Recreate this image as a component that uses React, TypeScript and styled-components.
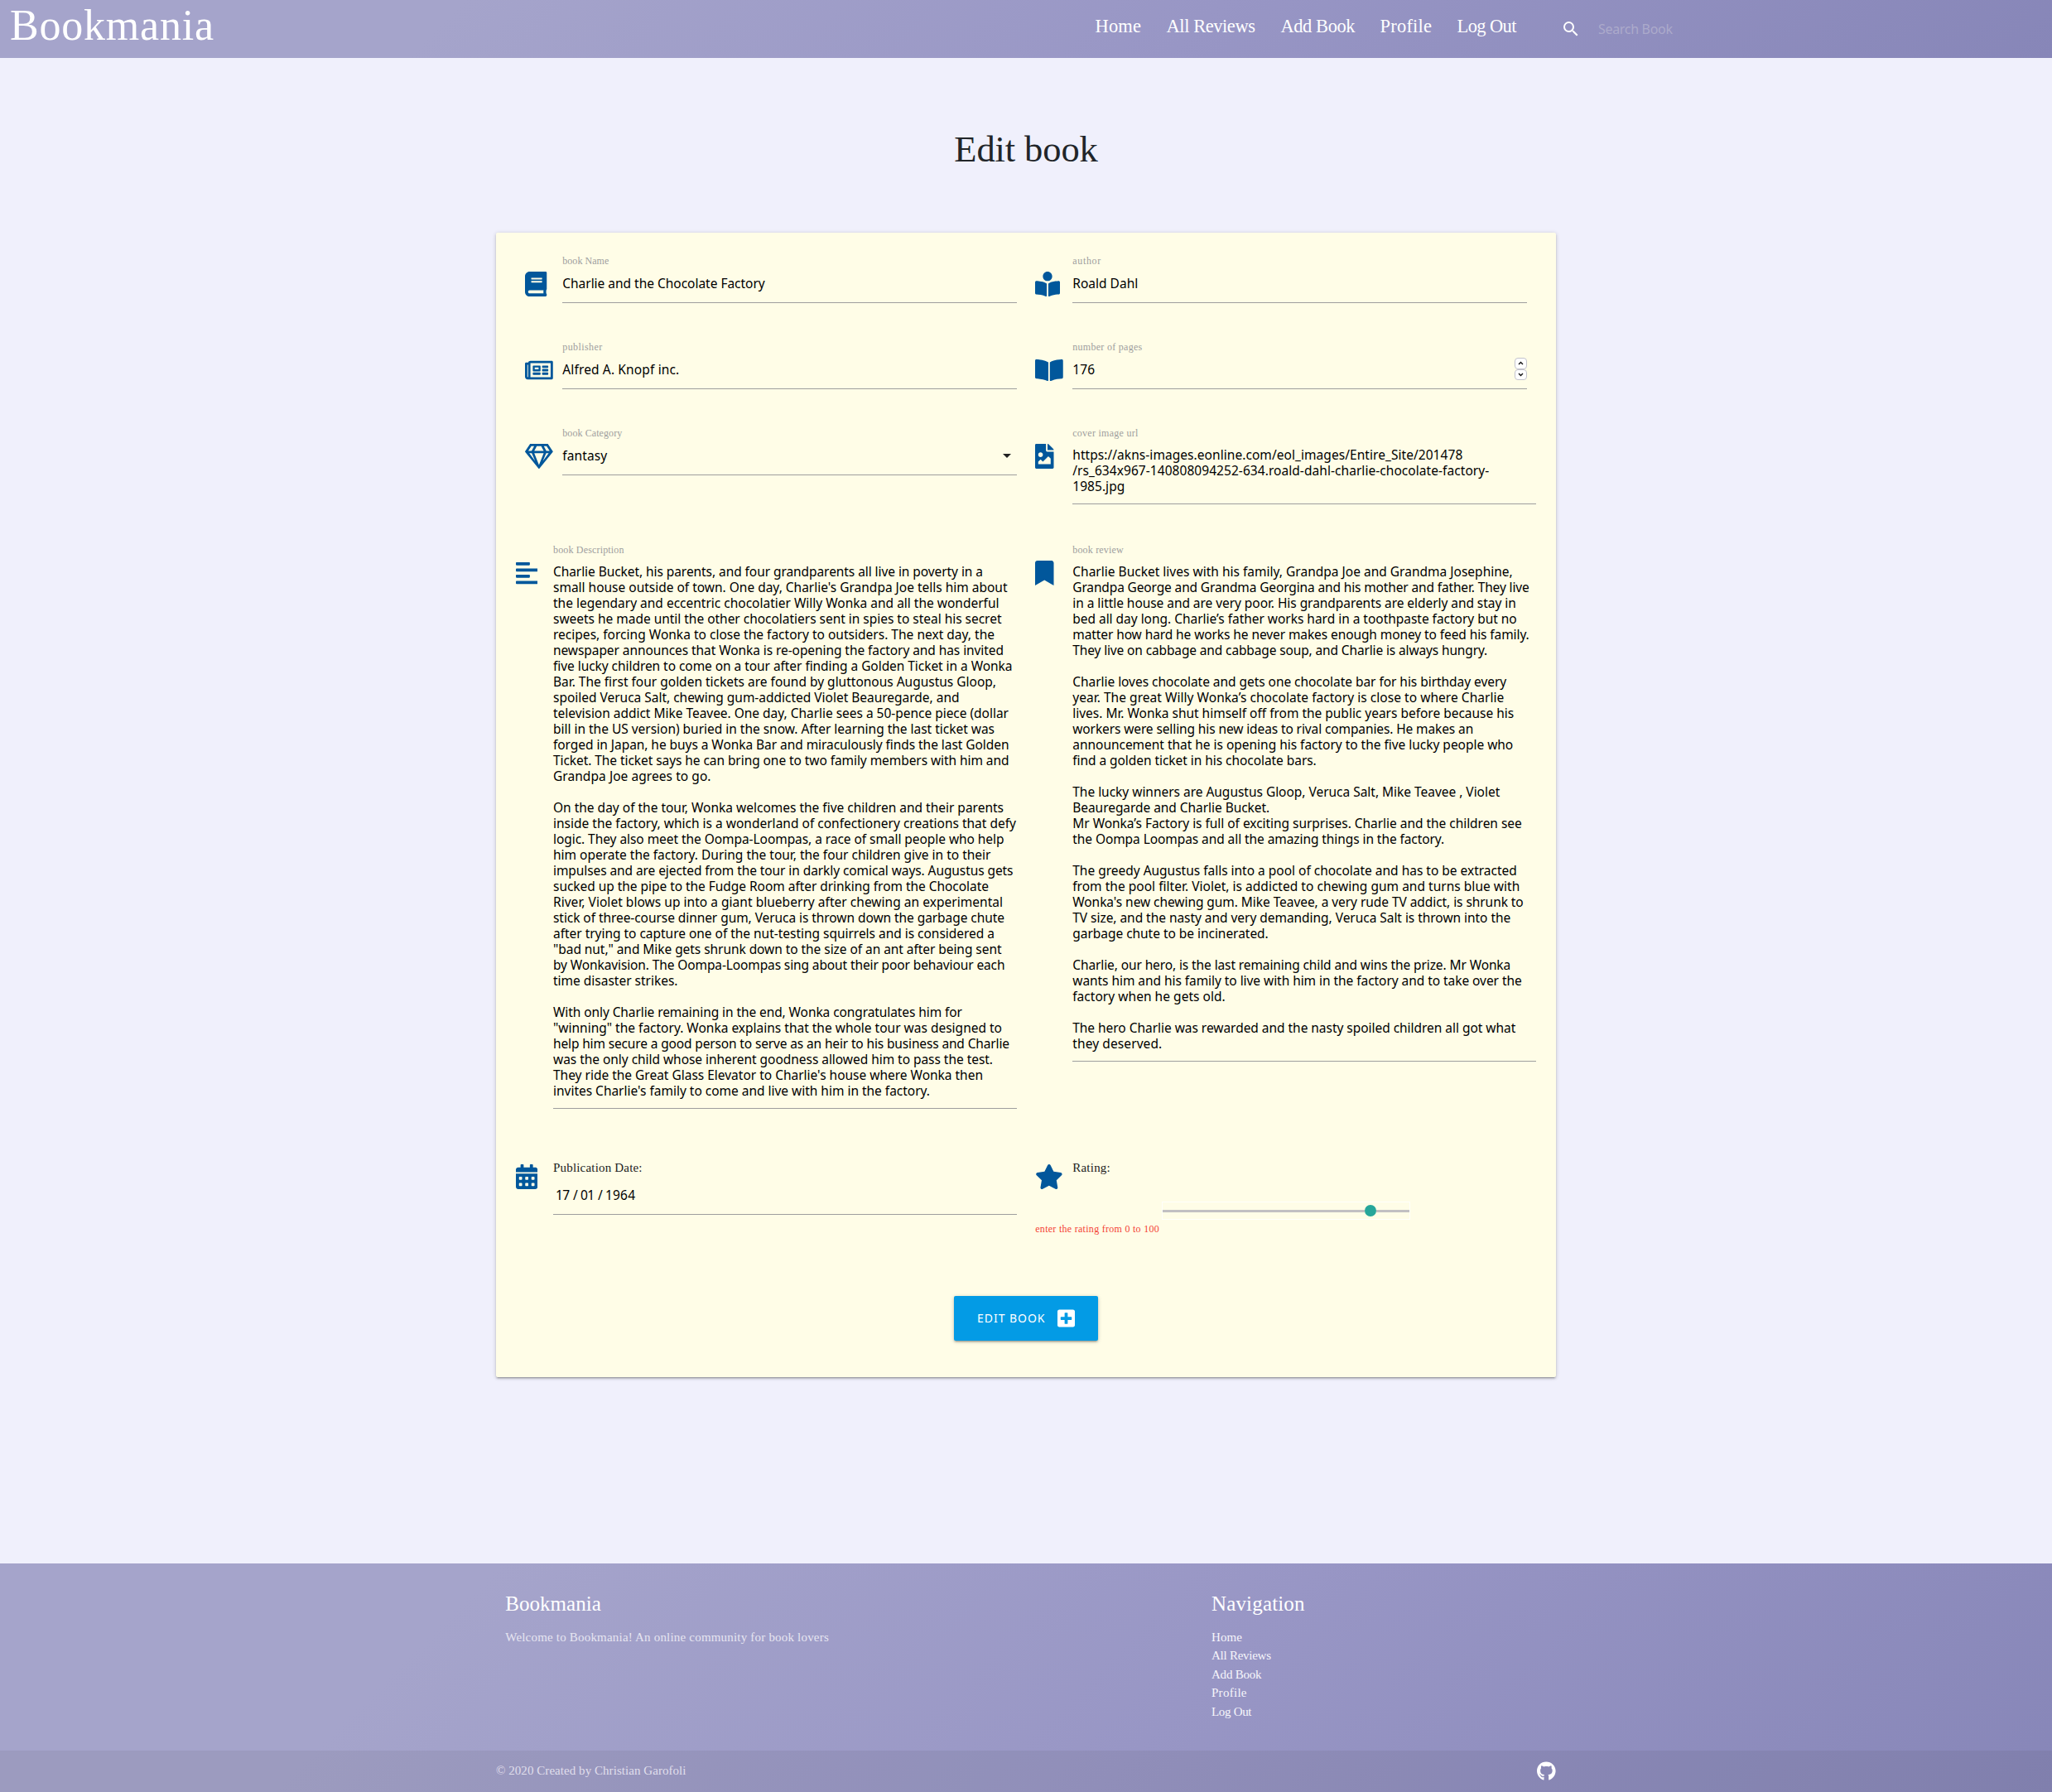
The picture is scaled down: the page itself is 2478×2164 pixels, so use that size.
import React, { useLayoutEffect, useRef, useState } from "react";
import styled, { createGlobalStyle } from "styled-components";
import {
  FaAlignLeft,
  FaBook,
  FaBookmark,
  FaBookOpen,
  FaBookReader,
  FaCalendarAlt,
  FaFileImage,
  FaGithub,
  FaPlusSquare,
  FaRegGem,
  FaRegNewspaper,
  FaStar,
} from "react-icons/fa";
import { MdSearch } from "react-icons/md";

const serif = '"Liberation Serif", serif';
const sans = '"Noto Sans", sans-serif';
const gradient =
  "linear-gradient(135deg, #a5a4cb 22%, #9896c5 58%, #8786b8 100%)";

const GlobalStyle = createGlobalStyle`
  *, *::before, *::after { box-sizing: border-box; }
  body {
    margin: 0;
    background: #f0f0fc;
    color: #212529;
    font-family: ${serif};
    font-size: 15px;
  }
  ul { list-style: none; margin: 0; padding: 0; }
  h1, h2, p { margin: 0; font-weight: 400; }
  a { color: inherit; text-decoration: none; }
`;

/* A single line of text whose tracking is tuned so that it spans a given width. */
const Tracked = styled.span`
  white-space: pre;
`;

function Line({ text, width }: { text: string; width: number }) {
  const ref = useRef<HTMLSpanElement>(null);
  const [spacing, setSpacing] = useState(0);
  useLayoutEffect(() => {
    const el = ref.current;
    if (!el || text.length < 2) return;
    el.style.letterSpacing = "0px";
    const natural = el.getBoundingClientRect().width;
    const next = (width - natural) / (text.length - 1);
    el.style.letterSpacing = `${next}px`;
    setSpacing(next);
  }, [text, width]);
  return (
    <Tracked ref={ref} style={{ letterSpacing: `${spacing}px` }}>
      {text}
    </Tracked>
  );
}

const Page = styled.div`
  width: 2478px;
  min-height: 2164px;
  display: flex;
  flex-direction: column;
`;

const Header = styled.header`
  height: 70px;
  display: flex;
  align-items: flex-start;
  padding-left: 12px;
  background: ${gradient};
  color: #fff;
`;

const Logo = styled.a`
  font-size: 52px;
  line-height: 62px;
`;

const NavList = styled.ul`
  display: flex;
  margin-left: auto;
`;

const NavItem = styled.li<{ $w: number }>`
  width: ${(p) => p.$w}px;
  font-size: 22.5px;
  line-height: 64px;
`;

const Search = styled.div`
  width: 593.5px;
  height: 70px;
  display: flex;
  align-items: center;
  gap: 21.5px;
  svg { width: 24px; height: 24px; }
`;

const SearchHint = styled.span`
  padding-bottom: 1px;
  font-family: ${sans};
  font-size: 16px;
  color: #acaacb;
`;

const Main = styled.main`
  flex: 1;
  padding-top: 85px;
  display: flex;
  flex-direction: column;
  align-items: center;
`;

const Title = styled.h1`
  font-size: 44.5px;
  line-height: 50px;
  margin-bottom: 76px;
`;

const Card = styled.form`
  width: 1280px;
  height: 1382px;
  padding: 26px 24px 0;
  background: #fffde7;
  border-radius: 2px;
  box-shadow: 0 2px 2px 0 rgba(0, 0, 0, 0.14), 0 3px 1px -2px rgba(0, 0, 0, 0.12),
    0 1px 5px 0 rgba(0, 0, 0, 0.2);
`;

const Row = styled.div<{ $h: number }>`
  display: grid;
  grid-template-columns: 616px 616px;
  align-items: start;
  height: ${(p) => p.$h}px;
`;

const Cell = styled.div<{ $left?: boolean; $right?: boolean }>`
  display: grid;
  grid-template-columns: 45px 1fr;
  padding-left: ${(p) => (p.$left ? 11.25 : 0)}px;
  padding-right: ${(p) => (p.$right ? 11.25 : 0)}px;
`;

const IconSlot = styled.div<{ $w: number; $top?: number }>`
  padding-top: ${(p) => p.$top ?? 20.5}px;
  color: #01579b;
  line-height: 0;
  svg { height: 30px; width: ${(p) => p.$w}px; }
`;

const Label = styled.div`
  font-size: 12px;
  line-height: 16px;
  color: #9e9e9e;
`;

const Caption = styled.div`
  font-size: 15px;
  line-height: 22px;
  height: 34px;
  color: #212121;
`;

const Value = styled.div<{ $gap: number; $bottom: number; $indent?: number }>`
  display: flex;
  justify-content: space-between;
  align-items: center;
  margin-top: ${(p) => p.$gap}px;
  padding-bottom: ${(p) => p.$bottom}px;
  padding-left: ${(p) => p.$indent ?? 0}px;
  border-bottom: 1px solid #9e9e9e;
  font-family: ${sans};
  font-size: 15.5px;
  line-height: 19px;
  color: #000;
`;

const TextArea = styled.div`
  width: 100%;
`;

const TextLine = styled.div`
  height: 19px;
`;

const Caret = styled.span`
  margin-right: 7px;
  border: 5px solid transparent;
  border-top-color: #212121;
  border-bottom-width: 0;
`;

const Spinner = styled.span`
  display: flex;
  flex-direction: column;
  width: 14.5px;
  margin: -5px 0 -3px;
`;

const Step = styled.span`
  display: flex;
  align-items: center;
  justify-content: center;
  height: 13.5px;
  border: 1px solid #c3c3cc;
  border-radius: 4px;
  background: #fff;
  svg { width: 7px; height: 5px; }
`;

const DateParts = styled.div`
  display: flex;
`;

const DatePart = styled.span<{ $w: number }>`
  width: ${(p) => p.$w}px;
`;

const Slider = styled.div`
  grid-column: 1 / -1;
  width: 300.5px;
  height: 22px;
  margin: 15.5px 0 0 152.5px;
  border: 1px solid #fffffb;
  display: flex;
  align-items: center;
`;

const Track = styled.div<{ $w: number }>`
  width: ${(p) => p.$w}px;
  height: 3px;
  background: #c2c0c2;
`;

const Thumb = styled.div`
  width: 14px;
  height: 14px;
  border-radius: 50%;
  background: #26a69a;
`;

const Helper = styled.div`
  grid-column: 1 / -1;
  margin-top: 3px;
  font-size: 12px;
  line-height: 16px;
  color: #f44336;
`;

const Submit = styled.button`
  display: flex;
  align-items: center;
  gap: 15px;
  width: 174px;
  height: 54px;
  margin: 0 auto;
  padding: 0 0 0 28px;
  border: 0;
  border-radius: 2px;
  background: #039be5;
  color: #fff;
  font-family: ${sans};
  font-size: 14px;
  box-shadow: 0 2px 2px 0 rgba(0, 0, 0, 0.14), 0 3px 1px -2px rgba(0, 0, 0, 0.12),
    0 1px 5px 0 rgba(0, 0, 0, 0.2);
  span { padding-bottom: 1px; }
  svg { width: 21px; height: 24px; }
`;

const Footer = styled.footer`
  background: ${gradient};
  color: #fff;
`;

const FooterTop = styled.div`
  display: grid;
  grid-template-columns: 841.5px 1fr;
  width: 1280px;
  height: 226px;
  margin: 0 auto;
  padding: 35px 11.25px 0;
`;

const FooterTitle = styled.h2`
  font-size: 25px;
  line-height: 28px;
  margin-bottom: 14.75px;
`;

const FooterText = styled.p`
  font-size: 15px;
  line-height: 22.5px;
  color: #e6e5f1;
`;

const FooterLink = styled.li`
  font-size: 15px;
  line-height: 22.5px;
  color: #f6f5fb;
`;

const FooterNav = styled.div`
  padding-left: 11.25px;
`;

const Copyright = styled.div`
  background: rgba(51, 51, 51, 0.08);
`;

const CopyrightInner = styled.div`
  display: flex;
  justify-content: space-between;
  align-items: flex-start;
  width: 1280px;
  height: 50px;
  margin: 0 auto;
  line-height: 48px;
  color: #e0dfec;
  svg { width: 22.6px; height: 23.5px; margin-top: 12.5px; color: #fff; }
`;

type TextRow = [string, number];

const navItems: [string, number, number][] = [
  ["Home", 86, 55.5],
  ["All Reviews", 138, 107.5],
  ["Add Book", 120, 90],
  ["Profile", 93, 62.5],
  ["Log Out", 125, 72],
];

const footerLinks: TextRow[] = [
  ["Home", 37],
  ["All Reviews", 72],
  ["Add Book", 60.5],
  ["Profile", 42.5],
  ["Log Out", 48.5],
];

const coverUrl: TextRow[] = [
  ["https://akns-images.eonline.com/eol_images/Entire_Site/201478", 471],
  ["/rs_634x967-140808094252-634.roald-dahl-charlie-chocolate-factory-", 503],
  ["1985.jpg", 63],
];

const description: TextRow[] = [
  ["Charlie Bucket, his parents, and four grandparents all live in poverty in a", 519],
  ["small house outside of town. One day, Charlie's Grandpa Joe tells him about", 548.5],
  ["the legendary and eccentric chocolatier Willy Wonka and all the wonderful", 538.5],
  ["sweets he made until the other chocolatiers sent in spies to steal his secret", 541.5],
  ["recipes, forcing Wonka to close the factory to outsiders. The next day, the", 533],
  ["newspaper announces that Wonka is re-opening the factory and has invited", 544],
  ["five lucky children to come on a tour after finding a Golden Ticket in a Wonka", 554.5],
  ["Bar. The first four golden tickets are found by gluttonous Augustus Gloop,", 535],
  ["spoiled Veruca Salt, chewing gum-addicted Violet Beauregarde, and", 490.5],
  ["television addict Mike Teavee. One day, Charlie sees a 50-pence piece (dollar", 550],
  ["bill in the US version) buried in the snow. After learning the last ticket was", 533],
  ["forged in Japan, he buys a Wonka Bar and miraculously finds the last Golden", 550.5],
  ["Ticket. The ticket says he can bring one to two family members with him and", 550.5],
  ["Grandpa Joe agrees to go.", 190.5],
  ["", 0],
  ["On the day of the tour, Wonka welcomes the five children and their parents", 544],
  ["inside the factory, which is a wonderland of confectionery creations that defy", 559],
  ["logic. They also meet the Oompa-Loompas, a race of small people who help", 544.5],
  ["him operate the factory. During the tour, the four children give in to their", 528.5],
  ["impulses and are ejected from the tour in darkly comical ways. Augustus gets", 555.5],
  ["sucked up the pipe to the Fudge Room after drinking from the Chocolate", 526],
  ["River, Violet blows up into a giant blueberry after chewing an experimental", 543],
  ["stick of three-course dinner gum, Veruca is thrown down the garbage chute", 545],
  ["after trying to capture one of the nut-testing squirrels and is considered a", 533],
  ["\"bad nut,\" and Mike gets shrunk down to the size of an ant after being sent", 541.5],
  ["by Wonkavision. The Oompa-Loompas sing about their poor behaviour each", 545.5],
  ["time disaster strikes.", 150.5],
  ["", 0],
  ["With only Charlie remaining in the end, Wonka congratulates him for", 494],
  ["\"winning\" the factory. Wonka explains that the whole tour was designed to", 542],
  ["help him secure a good person to serve as an heir to his business and Charlie", 551],
  ["was the only child whose inherent goodness allowed him to pass the test.", 531],
  ["They ride the Great Glass Elevator to Charlie's house where Wonka then", 519],
  ["invites Charlie's family to come and live with him in the factory.", 455],
];

const review: TextRow[] = [
  ["Charlie Bucket lives with his family, Grandpa Joe and Grandma Josephine,", 531.5],
  ["Grandpa George and Grandma Georgina and his mother and father. They live", 551.5],
  ["in a little house and are very poor. His grandparents are elderly and stay in", 535.5],
  ["bed all day long. Charlie’s father works hard in a toothpaste factory but no", 536.5],
  ["matter how hard he works he never makes enough money to feed his family.", 551.5],
  ["They live on cabbage and cabbage soup, and Charlie is always hungry.", 501],
  ["", 0],
  ["Charlie loves chocolate and gets one chocolate bar for his birthday every", 524],
  ["year. The great Willy Wonka’s chocolate factory is close to where Charlie", 521],
  ["lives. Mr. Wonka shut himself off from the public years before because his", 533],
  ["workers were selling his new ideas to rival companies. He makes an", 484],
  ["announcement that he is opening his factory to the five lucky people who", 532],
  ["find a golden ticket in his chocolate bars.", 294.5],
  ["", 0],
  ["The lucky winners are Augustus Gloop, Veruca Salt, Mike Teavee , Violet", 516],
  ["Beauregarde and Charlie Bucket.", 238],
  ["Mr Wonka’s Factory is full of exciting surprises. Charlie and the children see", 542.5],
  ["the Oompa Loompas and all the amazing things in the factory.", 449],
  ["", 0],
  ["The greedy Augustus falls into a pool of chocolate and has to be extracted", 536.5],
  ["from the pool filter. Violet, is addicted to chewing gum and turns blue with", 540],
  ["Wonka's new chewing gum. Mike Teavee, a very rude TV addict, is shrunk to", 544.5],
  ["TV size, and the nasty and very demanding, Veruca Salt is thrown into the", 529],
  ["garbage chute to be incinerated.", 236.5],
  ["", 0],
  ["Charlie, our hero, is the last remaining child and wins the prize. Mr Wonka", 529],
  ["wants him and his family to live with him in the factory and to take over the", 542.5],
  ["factory when he gets old.", 184.5],
  ["", 0],
  ["The hero Charlie was rewarded and the nasty spoiled children all got what", 535],
  ["they deserved.", 108],
];

function Paragraphs({ lines }: { lines: TextRow[] }) {
  return (
    <TextArea>
      {lines.map(([text, width], i) => (
        <TextLine key={i}>{text && <Line text={text} width={width} />}</TextLine>
      ))}
    </TextArea>
  );
}

interface FieldProps {
  icon: React.ReactNode;
  iconWidth: number;
  label: TextRow;
  gap?: number;
  bottom?: number;
  left?: boolean;
  right?: boolean;
  children: React.ReactNode;
}

function Field({ icon, iconWidth, label, gap = 10, bottom = 13, left = true, right = true, children }: FieldProps) {
  return (
    <Cell $left={left} $right={right}>
      <IconSlot $w={iconWidth}>{icon}</IconSlot>
      <div>
        <Label>
          <Line text={label[0]} width={label[1]} />
        </Label>
        <Value $gap={gap} $bottom={bottom}>
          {children}
        </Value>
      </div>
    </Cell>
  );
}

export default function App() {
  return (
    <Page>
      <GlobalStyle />
      <Header>
        <Logo href="#">
          <Line text="Bookmania" width={246} />
        </Logo>
        <NavList>
          {navItems.map(([name, slot, width]) => (
            <NavItem key={name} $w={slot}>
              <a href="#"><Line text={name} width={width} /></a>
            </NavItem>
          ))}
        </NavList>
        <Search>
          <MdSearch />
          <SearchHint><Line text="Search Book" width={90} /></SearchHint>
        </Search>
      </Header>

      <Main>
        <Title><Line text="Edit book" width={173.5} /></Title>
        <Card>
          <Row $h={104}>
            <Field icon={<FaBook />} iconWidth={26.25} label={["book Name", 56]}>
              <Line text="Charlie and the Chocolate Factory" width={244.5} />
            </Field>
            <Field icon={<FaBookReader />} iconWidth={30} label={["author", 34]}>
              <Line text="Roald Dahl" width={79} />
            </Field>
          </Row>
          <Row $h={104}>
            <Field icon={<FaRegNewspaper />} iconWidth={33.75} label={["publisher", 48]}>
              <Line text="Alfred A. Knopf inc." width={141} />
            </Field>
            <Field icon={<FaBookOpen />} iconWidth={33.75} label={["number of pages", 84]}>
              <Line text="176" width={27} />
              <Spinner>
                <Step>
                  <svg viewBox="0 0 7 5"><path d="M1 4l2.5-2.5L6 4" fill="none" stroke="#111" strokeWidth="1.4" /></svg>
                </Step>
                <Step>
                  <svg viewBox="0 0 7 5"><path d="M1 1l2.5 2.5L6 1" fill="none" stroke="#111" strokeWidth="1.4" /></svg>
                </Step>
              </Spinner>
            </Field>
          </Row>
          <Row $h={141}>
            <Field icon={<FaRegGem />} iconWidth={33.75} label={["book Category", 72]}>
              <Line text="fantasy" width={54} />
              <Caret />
            </Field>
            <Field icon={<FaFileImage />} iconWidth={22.5} label={["cover image url", 79]} gap={9} bottom={11} right={false}>
              <Paragraphs lines={coverUrl} />
            </Field>
          </Row>
          <Row $h={743}>
            <Field icon={<FaAlignLeft />} iconWidth={26.25} label={["book Description", 85.5]} gap={9} bottom={11} left={false}>
              <Paragraphs lines={description} />
            </Field>
            <Field icon={<FaBookmark />} iconWidth={22.5} label={["book review", 61.5]} gap={9} bottom={11} right={false}>
              <Paragraphs lines={review} />
            </Field>
          </Row>
          <Row $h={166}>
            <Cell $right>
              <IconSlot $w={26.25} $top={6.5}><FaCalendarAlt /></IconSlot>
              <div>
                <Caption><Line text="Publication Date:" width={107.5} /></Caption>
                <Value $gap={1} $bottom={13} $indent={3}>
                  <DateParts>
                    <DatePart $w={21}><Line text="17" width={17} /></DatePart>
                    <DatePart $w={9}>/</DatePart>
                    <DatePart $w={21}><Line text="01" width={17} /></DatePart>
                    <DatePart $w={9}>/</DatePart>
                    <DatePart $w={40}><Line text="1964" width={36} /></DatePart>
                  </DateParts>
                </Value>
              </div>
            </Cell>
            <Cell $left>
              <IconSlot $w={33.75} $top={6.5}><FaStar /></IconSlot>
              <Caption><Line text="Rating:" width={45.5} /></Caption>
              <Slider>
                <Track $w={244} />
                <Thumb />
                <Track $w={40.5} />
              </Slider>
              <Helper><Line text="enter the rating from 0 to 100" width={149.5} /></Helper>
            </Cell>
          </Row>
          <Submit type="button">
            <Line text="EDIT BOOK" width={81.5} />
            <FaPlusSquare />
          </Submit>
        </Card>
      </Main>

      <Footer>
        <FooterTop>
          <div>
            <FooterTitle><Line text="Bookmania" width={115.5} /></FooterTitle>
            <FooterText>
              <Line text="Welcome to Bookmania! An online community for book lovers" width={390.5} />
            </FooterText>
          </div>
          <FooterNav>
            <FooterTitle><Line text="Navigation" width={112.5} /></FooterTitle>
            <ul>
              {footerLinks.map(([name, width]) => (
                <FooterLink key={name}>
                  <a href="#"><Line text={name} width={width} /></a>
                </FooterLink>
              ))}
            </ul>
          </FooterNav>
        </FooterTop>
        <Copyright>
          <CopyrightInner>
            <Line text="© 2020 Created by Christian Garofoli" width={229.5} />
            <FaGithub />
          </CopyrightInner>
        </Copyright>
      </Footer>
    </Page>
  );
}
